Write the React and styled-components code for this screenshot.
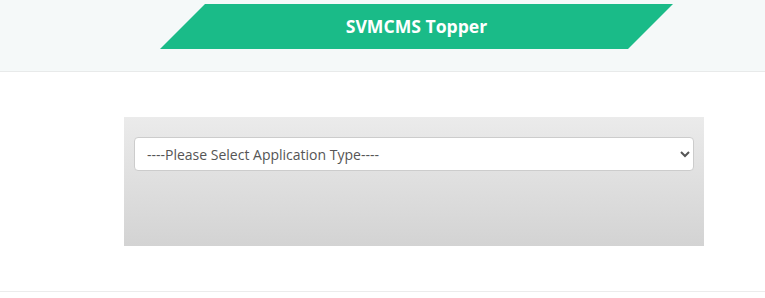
import React from "react";
import styled, { createGlobalStyle } from "styled-components";

const Global = createGlobalStyle`
  html, body { margin: 0; padding: 0; background: #ffffff; }
  body { font-family: "Open Sans", "Liberation Sans", sans-serif; }
  * { box-sizing: border-box; }
`;

const Header = styled.header`
  height: 72px;
  background: #f5f9f9;
  border-bottom: 1px solid #e8eaea;
  padding-top: 4px;
`;

const Banner = styled.div`
  width: 513px;
  height: 45px;
  margin-left: 160px;
  background: #1abb88;
  clip-path: polygon(45px 0, 513px 0, 468px 45px, 0 45px);
  display: flex;
  align-items: center;
  justify-content: center;
  padding-bottom: 1px;
`;

const Title = styled.h1`
  margin: 0;
  font-family: "Open Sans", sans-serif;
  font-size: 17.6px;
  font-weight: 700;
  color: #ffffff;
  letter-spacing: 0;
`;

const Content = styled.main`
  padding: 45px 0 45px 124px;
  border-bottom: 1px solid #ececec;
`;

const Panel = styled.div`
  width: 580px;
  height: 129px;
  padding: 20px 10px;
  background: linear-gradient(to bottom, #ebebeb, #d3d3d3);
`;

const Select = styled.select`
  display: block;
  width: 100%;
  height: 34px;
  padding: 6px 8px;
  font-family: "Open Sans", sans-serif;
  font-size: 14px;
  color: #555555;
  background: #ffffff;
  border: 1px solid #cccccc;
  border-radius: 4px;
  outline: none;
`;

export default function App() {
  return (
    <>
      <Global />
      <Header>
        <Banner>
          <Title>SVMCMS Topper</Title>
        </Banner>
      </Header>
      <Content>
        <Panel>
          <Select defaultValue="">
            <option value="">----Please Select Application Type----</option>
            <option value="1">Topper</option>
          </Select>
        </Panel>
      </Content>
    </>
  );
}
